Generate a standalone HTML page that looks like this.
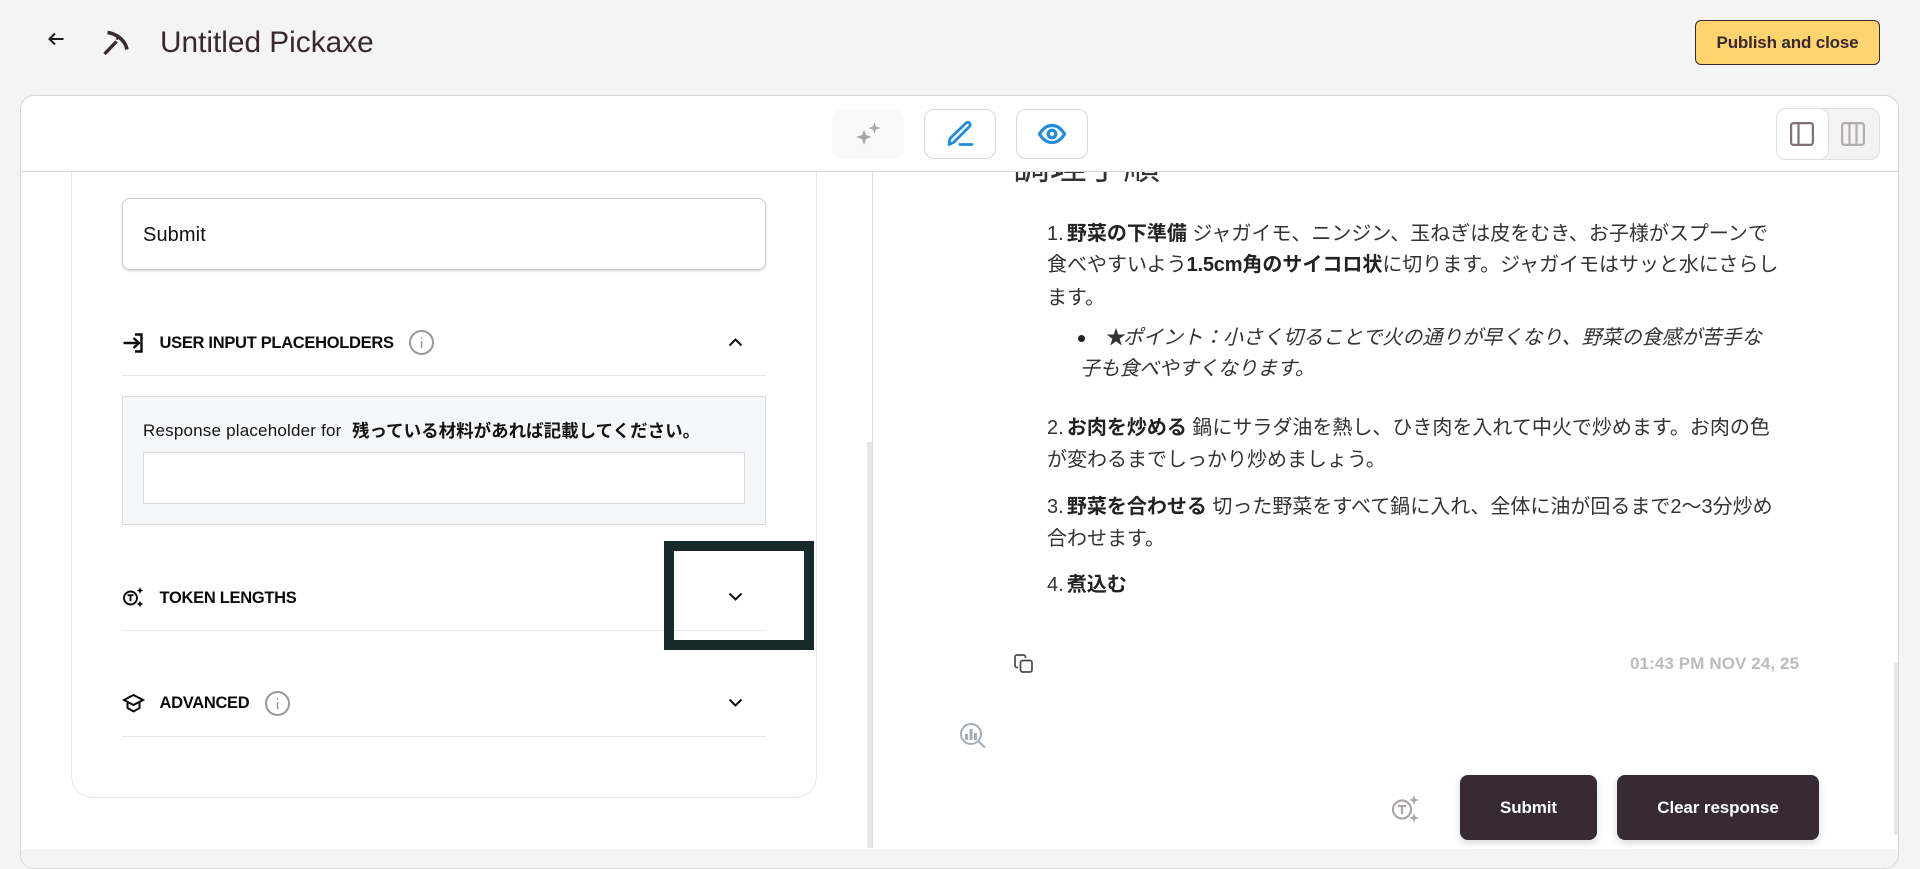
<!DOCTYPE html>
<html lang="ja"><head><meta charset="utf-8"><title>Untitled Pickaxe</title>
<style>
html,body{margin:0;padding:0;width:1920px;height:869px;overflow:hidden;background:#f4f4f4;font-family:"Liberation Sans","Noto Sans CJK JP",sans-serif}
.a{position:absolute}
.t{position:absolute;white-space:nowrap}
svg{position:absolute;overflow:visible}
.jp{position:absolute;white-space:nowrap;font-size:20px;line-height:32px;color:#333;font-family:"Liberation Sans","Noto Sans CJK JP",sans-serif;font-weight:400}
.jp b{color:#222;font-weight:700}
.jp i{font-style:normal;margin-right:-2.4px}
.h{font-size:16.5px;font-weight:700;color:#0c0c0c;letter-spacing:-.3px;line-height:20px}
.div{position:absolute;left:122px;width:644px;height:1px;background:#e6e6e6}
.btn{position:absolute;top:775px;height:65px;background:#372a33;border-radius:8px;color:#fff;font-size:17px;font-weight:700;letter-spacing:-.1px;text-align:center;line-height:65px;box-shadow:0 3px 8px rgba(0,0,0,.16)}
</style></head><body>

<svg style="left:48px;top:32px" width="17" height="14" viewBox="0 0 17 14"><path d="M15.500 7H2M7 1.500 1.500 7 7 12.500" fill="none" stroke="#1d1d22" stroke-width="2"/></svg>
<svg style="left:103px;top:31px" width="25" height="24" viewBox="0 0 25 24"><path d="M1.500 23 13.500 10.500" fill="none" stroke="#36292f" stroke-width="3.400"/><path d="M4.500 1.500C12 2.500 22 8 24 18.500" fill="none" stroke="#36292f" stroke-width="3.600"/><path d="M13.500 8.500 16.500 5" fill="none" stroke="#36292f" stroke-width="2.400"/></svg>
<div class="t" style="left:160px;top:25px;font-size:29.800px;line-height:36px;color:#36292f">Untitled Pickaxe</div>
<div class="a" style="left:1695px;top:20px;width:183px;height:43px;background:#ffd36e;border:1px solid #36292f;border-radius:6px;color:#36292f;font-size:17px;font-weight:700;letter-spacing:-.15px;text-align:center;line-height:43px">Publish and close</div>

<div class="a" style="left:20px;top:95px;width:1877px;height:772px;background:#fff;border:1px solid #d6d6d6;border-radius:14px;overflow:hidden">
  <div class="a" style="left:0;top:753px;width:1877px;height:20px;background:#f4f4f4"></div>
</div>
<div class="a" style="left:21px;top:171px;width:1877px;height:1px;background:#d8d8d8"></div>

<div class="a" style="left:832px;top:109px;width:72px;height:50px;background:#f9f9f9;border-radius:10px"></div>
<svg style="left:855px;top:121px" width="26" height="26" viewBox="0 0 26 26" fill="#a9a3a6"><path d="M9 8.500 11 14l5.500 2-5.500 2-2 6-2-6-6-2 6-2zM19.500 1l1.500 4.500L25.500 7l-4.500 1.500-1.500 4.500L18 8.500 13.500 7 18 5.500z"/></svg>
<div class="a" style="left:924px;top:109px;width:70px;height:48px;border:1px solid #d8d8d8;border-radius:10px"></div>
<svg style="left:947px;top:121px" width="26" height="26" viewBox="0 0 26 26" fill="none" stroke="#1f8ddb" stroke-width="2.800" stroke-linejoin="round" stroke-linecap="round"><path d="M2 23.500 3 17.500 18.500 2.500C20 1 21.500 1 22.500 2S23.500 4.500 22 6L6.500 21.500z"/><path d="M13 23.500H25"/></svg>
<div class="a" style="left:1016px;top:109px;width:70px;height:48px;border:1px solid #d8d8d8;border-radius:10px"></div>
<svg style="left:1038px;top:122.500px" width="28" height="22" viewBox="0 0 28 22" fill="none" stroke="#1f8ddb" stroke-width="3.200"><path d="M1.500 11C5 5 9 2.500 14 2.500S23 5 26.500 11C23 17 19 19.500 14 19.500S5 17 1.500 11z"/><circle cx="14" cy="11" r="3.800"/></svg>

<div class="a" style="left:1776px;top:108px;width:102px;height:50px;background:#f3f3f3;border:1px solid #e0e0e0;border-radius:10px"></div>
<div class="a" style="left:1776px;top:108px;width:51px;height:50px;background:#fff;border:1px solid #e0e0e0;border-radius:10px"></div>
<svg style="left:1790px;top:122px" width="24" height="24" viewBox="0 0 24 24" fill="none" stroke="#7d7177" stroke-width="2.200"><rect x="1.100" y="1.100" width="21.800" height="21.800" rx="2.500"/><path d="M8.500 1v22"/></svg>
<svg style="left:1841px;top:122px" width="24" height="24" viewBox="0 0 24 24" fill="none" stroke="#b3adb0" stroke-width="2.200"><rect x="1.100" y="1.100" width="21.800" height="21.800" rx="2.500"/><path d="M8.500 1v22M15.500 1v22"/></svg>

<!-- left card -->
<div class="a" style="left:71px;top:150px;width:744px;height:647px;border:1px solid #e6e6e6;border-top:0;border-radius:0 0 22px 22px;clip-path:inset(22px -2px -2px -2px)"></div>
<div class="a" style="left:867px;top:442px;width:5px;height:406px;background:#e7e7e7"></div>
<div class="a" style="left:872px;top:172px;width:1px;height:676px;background:#dcdcdc"></div>

<div class="a" style="left:122px;top:198px;width:642px;height:70px;border:1px solid #cfcfcf;border-radius:8px;box-shadow:0 1px 2px rgba(0,0,0,.2)"></div>
<div class="t" style="left:143px;top:223px;font-size:20px;line-height:24px;color:#111;letter-spacing:.1px">Submit</div>

<svg style="left:123px;top:333px" width="21" height="20" viewBox="0 0 21 20" fill="none" stroke="#0c0c0c" stroke-width="2.400"><path d="M0.500 10h15M10.500 5 16 10l-5.500 5M12 1.500h6.500v17H12"/></svg>
<div class="t h" style="left:159.500px;top:333px">USER INPUT PLACEHOLDERS</div>
<svg style="left:409px;top:330px" width="25" height="25" viewBox="0 0 25 25" fill="none" stroke="#999" stroke-width="2"><circle cx="12.500" cy="12.500" r="11.500"/><path d="M12.500 11v7M12.500 7v1.600" stroke-width="1.500"/></svg>
<svg style="left:728px;top:337px" width="15" height="10" viewBox="0 0 15 10" fill="none" stroke="#111" stroke-width="2"><path d="M1.500 8.500 7.500 2.500l6 6"/></svg>
<div class="div" style="top:375px"></div>

<div class="a" style="left:122px;top:396px;width:642px;height:127px;background:#f6f7f9;border:1px solid #d9d9de"></div>
<div class="t" style="left:143px;top:420px;font-size:17px;line-height:22px;color:#141414;letter-spacing:.2px">Response placeholder for</div>
<div class="t" style="left:352px;top:420px;font-size:17.500px;line-height:22px;color:#141414;font-weight:700">残っている材料があれば記載してください。</div>
<div class="a" style="left:143px;top:452px;width:600px;height:50px;background:#fff;border:1px solid #d9d9de"></div>

<svg style="left:123px;top:587px" width="21" height="21" viewBox="0 0 21 21"><circle cx="7.500" cy="11" r="6.500" fill="none" stroke="#0c0c0c" stroke-width="1.900"/><path d="M4.500 8.200h6M7.500 8.200v6" fill="none" stroke="#0c0c0c" stroke-width="1.900"/><path d="M17 0l1 2.500 2.500 1-2.500 1-1 2.500-1-2.500-2.500-1 2.500-1zM17 13.500l1 2.500 2.500 1-2.500 1-1 2.500-1-2.500-2.500-1 2.500-1z" fill="#0c0c0c"/></svg>
<div class="t h" style="left:159.500px;top:588px">TOKEN LENGTHS</div>
<div class="div" style="top:630px"></div>
<div class="a" style="left:664px;top:541px;width:130px;height:89px;border:10px solid #162a2a"></div>
<svg style="left:728px;top:592px" width="15" height="10" viewBox="0 0 15 10" fill="none" stroke="#111" stroke-width="2"><path d="M1.500 1.500 7.500 7.500l6-6"/></svg>

<svg style="left:123px;top:693px" width="21" height="20" viewBox="0 0 21 20" fill="none" stroke="#0c0c0c" stroke-width="2"><path d="M10.500 2 20 7l-9.500 5L1 7z"/><path d="M4.500 9.500v5.500l6 3.500 6-3.500V9.500"/></svg>
<div class="t h" style="left:159.500px;top:693px">ADVANCED</div>
<svg style="left:265px;top:691px" width="25" height="25" viewBox="0 0 25 25" fill="none" stroke="#999" stroke-width="2"><circle cx="12.500" cy="12.500" r="11.500"/><path d="M12.500 11v7M12.500 7v1.600" stroke-width="1.500"/></svg>
<svg style="left:728px;top:698px" width="15" height="10" viewBox="0 0 15 10" fill="none" stroke="#111" stroke-width="2"><path d="M1.500 1.500 7.500 7.500l6-6"/></svg>
<div class="div" style="top:736px"></div>

<!-- right -->
<div class="a" style="left:873px;top:172px;width:1020px;height:30px;overflow:hidden">
  <div class="t" style="left:140px;top:-27px;font-size:36.800px;line-height:44px;color:#333;font-weight:400">調理手順</div>
</div>
<div class="jp" style="left:1047px;top:218px"><i>1. </i><b>野菜の下準備</b> ジャガイモ、ニンジン、玉ねぎは皮をむき、お子様がスプーンで</div>
<div class="jp" style="left:1047px;top:249px">食べやすいよう<b><span style="letter-spacing:-.2px">1.5cm</span>角のサイコロ状</b><span style="letter-spacing:-.03px">に切ります。ジャガイモはサッと水にさらし</span></div>
<div class="jp" style="left:1047px;top:282px">ます。</div>
<div class="a" style="left:1078px;top:335px;width:7px;height:7px;border-radius:50%;background:#222"></div>
<div class="jp" style="left:1106px;top:322px;font-style:italic"><span style="font-style:normal;margin-right:-3px">★</span>ポイント：小さく切ることで火の通りが早くなり、野菜の食感が苦手な</div>
<div class="jp" style="left:1080px;top:353px;font-style:italic;letter-spacing:-.3px">子も食べやすくなります。</div>
<div class="jp" style="left:1047px;top:412px"><i>2. </i><b>お肉を炒める</b> 鍋にサラダ油を熱し、ひき肉を入れて中火で炒めます。お肉の色</div>
<div class="jp" style="left:1047px;top:444px">が変わるまでしっかり炒めましょう。</div>
<div class="jp" style="left:1047px;top:491px"><i>3. </i><b>野菜を合わせる</b> 切った野菜をすべて鍋に入れ、全体に油が回るまで2〜3分炒め</div>
<div class="jp" style="left:1047px;top:523px">合わせます。</div>
<div class="jp" style="left:1047px;top:569px"><i>4. </i><b>煮込む</b></div>

<svg style="left:1014px;top:654px" width="19" height="19" viewBox="0 0 19 19" fill="none" stroke="#4a4a4a" stroke-width="1.700"><rect x="6.500" y="6.500" width="11.500" height="11.500" rx="2"/><path d="M4 13.500H3A2 2 0 0 1 1 11.500V3A2 2 0 0 1 3 1H9.500A2 2 0 0 1 11.500 3V4"/></svg>
<div class="t" style="left:1630px;top:654px;font-size:17px;line-height:20px;font-weight:700;color:#bbb;letter-spacing:.1px">01:43 PM NOV 24, 25</div>

<svg style="left:960px;top:723px" width="26" height="25" viewBox="0 0 26 25"><circle cx="11" cy="11" r="10" fill="none" stroke="#a5adb5" stroke-width="2"/><path d="M5 11h3v6H5zM9.500 6h3v11h-3zM14 10h3v7h-3z" fill="#a5adb5"/><path d="M18 18l7 6.500" stroke="#a5adb5" stroke-width="2.200"/></svg>
<svg style="left:1391px;top:795px" width="28" height="28" viewBox="0 0 28 28"><circle cx="11" cy="14.500" r="9" fill="none" stroke="#aaa4a7" stroke-width="2.200"/><path d="M7 11h8M11 11v8" fill="none" stroke="#aaa4a7" stroke-width="2.200"/><path d="M23 0l1.300 3.700L28 5l-3.700 1.300L23 10l-1.300-3.700L18 5l3.700-1.300zM23 18l1.300 3.700L28 23l-3.700 1.300L23 28l-1.300-3.700L18 23l3.700-1.300z" fill="#aaa4a7"/></svg>

<div class="btn" style="left:1460px;width:137px">Submit</div>
<div class="btn" style="left:1617px;width:202px">Clear response</div>

<div class="a" style="left:1894px;top:662px;width:4px;height:173px;background:#e8e8e8"></div>
</body></html>
